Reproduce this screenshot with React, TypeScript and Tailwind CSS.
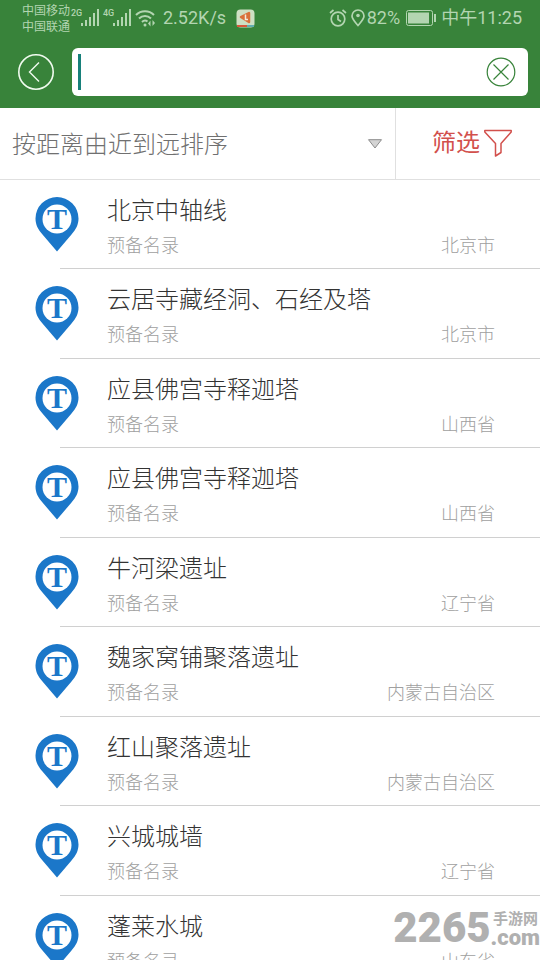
import { useState } from 'react'

const SITES = [
  { id: 1, name: '北京中轴线', type: '预备名录', region: '北京市' },
  { id: 2, name: '云居寺藏经洞、石经及塔', type: '预备名录', region: '北京市' },
  { id: 3, name: '应县佛宫寺释迦塔', type: '预备名录', region: '山西省' },
  { id: 4, name: '应县佛宫寺释迦塔', type: '预备名录', region: '山西省' },
  { id: 5, name: '牛河梁遗址', type: '预备名录', region: '辽宁省' },
  { id: 6, name: '魏家窝铺聚落遗址', type: '预备名录', region: '内蒙古自治区' },
  { id: 7, name: '红山聚落遗址', type: '预备名录', region: '内蒙古自治区' },
  { id: 8, name: '兴城城墙', type: '预备名录', region: '辽宁省' },
  { id: 9, name: '蓬莱水城', type: '预备名录', region: '山东省' },
]

function Signal({ label }: { label: string }) {
  return (
    <div className="flex items-start">
      <span className="w-[10px] text-[9px] leading-none font-medium">{label}</span>
      <svg width="18" height="18" viewBox="0 0 18 18" fill="currentColor" aria-hidden="true">
        <rect x="0" y="14" width="2" height="3" />
        <rect x="4" y="11" width="2" height="6" />
        <rect x="8" y="8" width="2" height="9" />
        <rect x="12" y="4" width="2" height="13" />
        <rect x="16" y="0" width="2" height="17" />
      </svg>
    </div>
  )
}

function StatusBar() {
  return (
    <div className="flex h-9 items-center justify-between pl-[22px] pr-[18px] text-[#b3d5b1]">
      <div className="flex items-center">
        <div className="flex w-[49px] flex-col pt-0.5 text-xs leading-4">
          <span>中国移动</span>
          <span>中国联通</span>
        </div>
        <div className="flex gap-1">
          <Signal label="2G" />
          <Signal label="4G" />
        </div>
        <svg className="ml-1" width="20" height="18" viewBox="0 0 20 18" fill="none" stroke="currentColor" strokeWidth="2" aria-hidden="true">
          <path d="M1 6c5-5 13-5 18 0" />
          <path d="M4 9.500c3.500-3.500 8.500-3.500 12 0" />
          <path d="M7 13c2-2 3.500-2 5.500-.5" />
          <circle cx="10" cy="16" r="1.500" fill="currentColor" stroke="none" />
          <path d="M13 14.500l2.500-3v6zM20 14l-2.500 3v-6z" fill="currentColor" stroke="none" />
        </svg>
        <span className="ml-2 text-lg">2.52K/s</span>
        <svg className="ml-2.5" width="19" height="19" viewBox="0 0 19 19" aria-hidden="true">
          <rect x="0.500" y="0.500" width="18" height="18" rx="4" fill="#cfe0c4" />
          <path d="M5 8l8-4v9z" fill="#d9713a" stroke="#d9713a" strokeWidth="2.500" strokeLinejoin="round" />
          <path d="M9.500 5.500v5H12" fill="none" stroke="#f3ebdc" strokeWidth="1.500" />
          <path d="M1 17h10" stroke="#d9583a" strokeWidth="2" />
          <path d="M11 17h7" stroke="#62aeb0" strokeWidth="2" />
        </svg>
      </div>
      <div className="flex items-center text-lg">
        <svg width="18" height="18" viewBox="0 0 18 18" fill="none" stroke="currentColor" strokeWidth="1.700" aria-hidden="true">
          <circle cx="9" cy="10" r="6.800" />
          <path d="M9 6v4.500l3 2M1 4l3.500-3M17 4l-3.500-3" />
        </svg>
        <svg className="ml-1" width="14" height="18" viewBox="0 0 14 18" fill="none" stroke="currentColor" strokeWidth="1.700" aria-hidden="true">
          <path d="M7 16.500C4 13 1 10 1 7a6 6 0 0 1 12 0c0 3-3 6-6 9.500z" />
          <circle cx="7" cy="6.500" r="1.800" fill="currentColor" stroke="none" />
        </svg>
        <span className="ml-0.5">82%</span>
        <svg className="ml-1.5 mr-1" width="31" height="16" viewBox="0 0 31 16" aria-hidden="true">
          <rect x="0.500" y="0.500" width="26" height="15" rx="2" fill="none" stroke="currentColor" />
          <rect x="2" y="2.500" width="21" height="11" fill="currentColor" />
          <rect x="28" y="4" width="2" height="8" fill="currentColor" />
        </svg>
        <span>中午11:25</span>
      </div>
    </div>
  )
}

function SitePin() {
  return (
    <svg className="shrink-0" width="44" height="56" viewBox="0 0 44 56" aria-hidden="true">
      <path d="M22 54.500L7.500 37.500C3 32.500 0.500 27.500 0.500 21.500a21.500 21.500 0 0 1 43 0C43.500 27.500 41 32.500 36.500 37.500z" fill="#1b77c9" />
      <circle cx="22" cy="22" r="14.500" fill="#fff" />
      <text x="22" y="32" textAnchor="middle" fontSize="30" fontWeight="700" fill="#1b77c9" className="font-['Liberation_Serif',serif]">T</text>
    </svg>
  )
}

export default function App() {
  const [query, setQuery] = useState('')
  const [sort, setSort] = useState('distance')

  return (
    <div className="relative flex h-screen flex-col overflow-hidden bg-white font-[Roboto,'Noto_Sans_CJK_SC',sans-serif] font-light">
      {/* Header */}
      <header className="shrink-0 bg-[#38833a] font-normal">
        <StatusBar />
        <div className="flex items-center gap-[18px] pt-3 pr-3 pb-3 pl-[18px]">
          <button aria-label="返回" className="shrink-0">
            <svg width="36" height="36" viewBox="0 0 36 36" fill="none" stroke="#f0fbef" aria-hidden="true">
              <circle cx="18" cy="18" r="17.200" strokeWidth="1.600" />
              <path d="M21 8.500L11.500 18l9.500 9.500" strokeWidth="1.400" />
            </svg>
          </button>
          <div className="flex h-12 flex-1 items-center rounded-md bg-white pr-3 pl-1.5">
            <span className="h-9 w-[3px] bg-[#17807a]" />
            <input
              value={query}
              onChange={e => setQuery(e.target.value)}
              aria-label="搜索"
              className="h-full min-w-0 flex-1 px-1 text-xl text-[#444] outline-none"
            />
            <button aria-label="清除" onClick={() => setQuery('')} className="shrink-0">
              <svg width="30" height="30" viewBox="0 0 30 30" fill="none" stroke="#38833a" strokeWidth="1.200" aria-hidden="true">
                <circle cx="15" cy="15" r="13.800" />
                <path d="M7.500 7.500l15 15M22.500 7.500l-15 15" />
              </svg>
            </button>
          </div>
        </div>
      </header>

      {/* Sort and filter */}
      <div className="flex h-[72px] shrink-0 border-b border-[#e0e0e0]">
        <label className="flex flex-1 items-center pr-3 pl-3">
          <select
            value={sort}
            onChange={e => setSort(e.target.value)}
            aria-label="排序"
            className="min-w-0 flex-1 appearance-none bg-transparent pt-0.5 text-2xl text-[#707070] outline-none"
          >
            <option value="distance">按距离由近到远排序</option>
          </select>
          <svg width="16" height="10" viewBox="0 0 16 10" aria-hidden="true">
            <path d="M1.500 0.700h13L8 9z" fill="#d4d4d4" stroke="#8c8c8c" />
          </svg>
        </label>
        <button className="flex w-[145px] items-center justify-end gap-1 border-l border-[#e0e0e0] pr-7 pb-0.5 text-2xl font-normal text-[#d2504c]">
          筛选
          <svg width="28" height="28" viewBox="0 0 28 28" fill="none" stroke="currentColor" strokeWidth="1.500" strokeLinejoin="round" aria-hidden="true">
            <path d="M0.800 1.500h26.400v1.500L17 14.500v9l-5.500 3.500V14.500L0.800 3z" />
          </svg>
        </button>
      </div>

      {/* Site list */}
      <ul className="min-h-0 flex-1 overflow-hidden">
        {SITES.map(s => (
          <li key={s.id} className="relative flex items-start pt-[17px] pl-[35px] odd:h-[89px] even:h-[90px] after:absolute after:right-0 after:bottom-0 after:left-[60px] after:h-px after:bg-[#d0d0d0]">
            <SitePin />
            <div className="ml-7 flex min-w-0 flex-1 flex-col gap-[9px] pr-[45px]">
              <h3 className="text-2xl leading-7 text-[#333]">{s.name}</h3>
              <div className="flex justify-between text-lg leading-6 text-[#a0a0a0]">
                <span>{s.type}</span>
                <span>{s.region}</span>
              </div>
            </div>
          </li>
        ))}
      </ul>

      {/* Watermark */}
      <div className="absolute right-0 bottom-3 flex items-end font-black text-[#b0b0b0]">
        <span className="text-[42px] leading-10">2265</span>
        <div className="flex flex-col">
          <span className="pr-0.5 text-right text-[15px] leading-[18px] font-bold">手游网</span>
          <span className="text-[22px] leading-5">.com</span>
        </div>
      </div>
    </div>
  )
}
